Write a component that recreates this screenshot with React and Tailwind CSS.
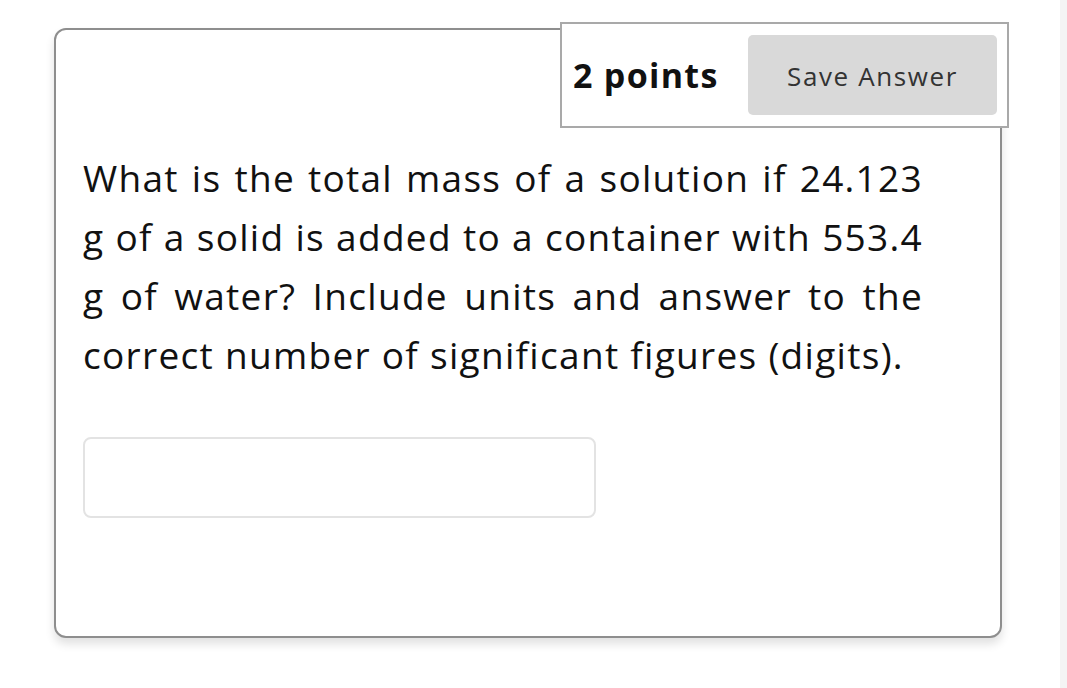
export default function App() {
  return (
    <div className="flex w-[1067px] h-[688px] bg-white overflow-hidden" style={{ fontFamily: '"Open Sans", sans-serif' }}>
      <div className="w-[1060px] h-full pl-[54px] pt-[28px]">
        <div className="relative w-[948px] h-[610px] rounded-[12px] border-2 border-[#8e8e8e] bg-white shadow-[0_6px_10px_rgba(0,0,0,0.12)] pl-[27px] pt-[118px]">
          <div className="absolute left-[504px] top-[-8px] w-[449px] h-[106px] bg-white border-2 border-[#a9a9a9] flex items-center justify-between pl-[11px] pr-[10px]">
            <span className="text-[34px] font-bold text-[#111] leading-none tracking-[1.3px]">2 points</span>
            <button className="w-[249px] h-[80px] rounded-[5px] bg-[#d9d9d9] text-[26px] text-[#333] leading-none tracking-[1.6px] pt-[2px]">Save Answer</button>
          </div>
          <p className="w-[840px] text-[37px] leading-[59px] text-[#111] text-justify tracking-[1.3px]">
            What is the total mass of a solution if 24.123 g of a solid is added to a container with 553.4 g of water? Include units and answer to the correct number of significant figures (digits).
          </p>
          <div className="mt-[53px] w-[513px] h-[81px] rounded-[8px] border-2 border-[#e3e3e3] bg-white"></div>
        </div>
      </div>
      <div className="w-[7px] h-full bg-[#f4f4f4]"></div>
    </div>
  );
}
